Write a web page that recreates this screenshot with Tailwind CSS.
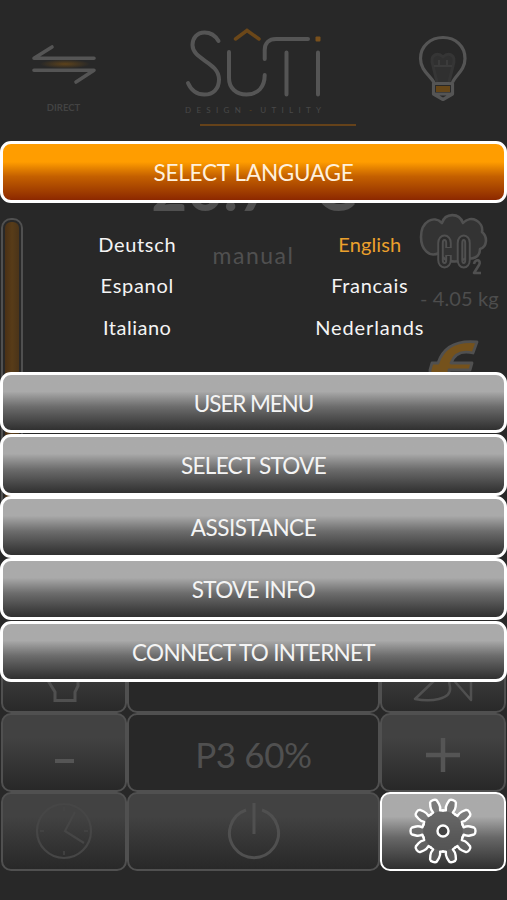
<!DOCTYPE html>
<html lang="en">
<head>
<meta charset="utf-8">
<meta name="viewport" content="width=device-width, initial-scale=1">
<title>Stove remote</title>
<script src="https://cdn.jsdelivr.net/npm/@tailwindcss/browser@4"></script>
</head>
<body class="bg-[#282828] overflow-hidden">
<div class="relative w-[507px] h-[900px] overflow-hidden bg-[#282828] font-['Lato','Open_Sans',sans-serif] text-[#555]">

  <!-- dimmed control panel -->
  <div class="flex flex-col h-full">
    <header class="flex h-[141px] shrink-0">
      <div class="w-[127px] flex flex-col items-center pt-[42px]">
        <svg class="w-[66px] h-[44px]" viewBox="0 0 66 44" fill="none">
          <defs><radialGradient id="glow"><stop offset="0" stop-color="#5e431b"/><stop offset="1" stop-color="#282828"/></radialGradient></defs>
          <ellipse cx="34" cy="22" rx="25" ry="4.500" fill="url(#glow)"/>
          <path d="M63 16.300H3L21 5M3 28.300H63L45 40" stroke="#555" stroke-width="3.600" stroke-linecap="round" stroke-linejoin="round"/>
        </svg>
        <span class="mt-[15px] text-[9.5px] leading-[14px] font-bold text-[#434343]">DIRECT</span>
      </div>
      <div class="w-[253px] flex flex-col pl-[56px] pt-[26px]">
        <svg class="w-[150px] h-[74px]" viewBox="183 26 150 74" fill="none" stroke="#555" stroke-width="4" stroke-linecap="round">
          <path d="M218.500 41C215 35 210 32.500 204.500 32.500C197 32.500 192.500 38 192.500 45C192.500 60 219 62 219 79.500C219 89 213 94.500 204.500 94.500C197 94.500 191 90 188 83"/>
          <path d="M229 52V78C229 88 236 94.500 246.500 94.500C258 94.500 264.700 87 264.700 75M264.700 59V50C264.700 43 269 39 276 39H308M286.500 52.500V94.500M318 52.500V94.500"/>
          <path d="M235.500 39L247 30.500L259 39" stroke="#6b4719" stroke-width="3.500"/>
          <rect x="315.500" y="36.500" width="5" height="5" rx="1" fill="#79501c" stroke="none"/>
        </svg>
        <div class="pl-[2px] text-[8px] leading-[20px] tracking-[5.3px] whitespace-nowrap text-[#484848]">DESIGN<span class="px-[3px] text-[#604518]">-</span>UTILITY</div>
        <div class="ml-[17px] mt-[4px] w-[156px] h-[2px] bg-[#65421a]"></div>
      </div>
      <div class="w-[126px] flex justify-center pt-[34px]">
        <svg class="w-[52px] h-[70px]" viewBox="417 34 52 70" fill="none" stroke="#555" stroke-width="3.200" stroke-linejoin="round">
          <path d="M434 82.500C430 75 420.500 70.500 420.500 58.500C420.500 46 430.500 37.500 443 37.500C455.500 37.500 465 46 465 58.500C465 70.500 455.500 75 452.500 82.500"/>
          <path d="M433.500 83.500H452.500V94L443 99.500L433.500 94ZM434 94H452"/>
          <rect x="436" y="86" width="14" height="6" fill="#674718" stroke="none"/>
          <path d="M437 82L433 66C429 54 438 52 443 57C448 52 457 54 453 66L449 82" stroke="#353535" stroke-width="3" fill="#303030"/>
          <path d="M434 66H452M439 60V66M447 60V66" stroke="#3b3b3b" stroke-width="2"/>
        </svg>
      </div>
    </header>

    <main class="flex h-[493px] shrink-0">
      <div class="w-[127px] pt-[77px] pl-[1px]">
        <div class="w-[22px] h-[330px] border-2 border-[#505050] rounded-[10px] p-[2px]"><div class="h-full rounded-[6px] bg-linear-to-r from-[#4a3015] via-[#583c18] to-[#4a3419]"></div></div>
      </div>
      <div class="w-[253px] flex flex-col items-center">
        <div class="mt-[16px] h-[60px] text-[62px] leading-[60px] font-bold whitespace-nowrap text-[#505050]">20.7 °C</div>
        <div class="mt-[23px] text-[23px] leading-[30px] tracking-[1.5px] text-[#505050]">manual</div>
      </div>
      <div class="w-[127px] flex flex-col pt-[71px]">
        <svg class="ml-[38px] w-[72px] h-[65px]" viewBox="418 212 72 65" fill="#333" stroke="#505050" stroke-width="2.600" stroke-linejoin="round">
          <path d="M439 253C429 258 421 249 421 237C421 221 434 215 442 223C445 213 459 212 463 223C471 214 484 222 482 232C488 237 487 247 480 249C480 258 471 260 468 257C458 264 445 263 439 253Z"/>
          <path d="M448.500 248V243C448.500 236 440.500 236 440.500 243V260C440.500 267 448.500 267 448.500 260V255M460 243C460 236 467.500 236 467.500 243V260C467.500 267 460 267 460 260Z" stroke-width="6.500" fill="none"/>
          <path d="M448.500 247V243C448.500 236 440.500 236 440.500 243V260C440.500 267 448.500 267 448.500 260V256M460 243C460 236 467.500 236 467.500 243V260C467.500 267 460 267 460 260Z" stroke="#2c2c2c" stroke-width="2.600" fill="none"/>
          <path d="M474 264C475 258 482 260 479 265L474 273H481" fill="none"/>
        </svg>
        <div class="ml-[40px] mt-[8px] text-[20px] leading-[26px] tracking-[0.1px] whitespace-nowrap text-[#4d4d4d]">- 4.05 kg</div>
        <svg class="ml-[48px] mt-[26px] w-[58px] h-[60px]" viewBox="428 337 58 60" fill="#75521c" stroke="#505050" stroke-width="2.800" stroke-linejoin="round">
          <path d="M430 370L432 363H438C443 348 456 340 477 342L473 353C460 350 454 355 451 363H472L470 370H449V380H430Z"/>
        </svg>
      </div>
    </main>

    <footer class="mx-[1px] grid grid-cols-[126px_253px_126px] auto-rows-[79px]">
      <div class="border-[2.5px] border-[#505050] rounded-[10px] flex items-end justify-center pb-[8px] bg-linear-to-b from-[#454545] from-30% to-[#292929]">
        <svg class="w-[36px] h-[36px]" viewBox="46 667 36 36" fill="none" stroke="#505050" stroke-width="3"><path d="M47 670V679L55 692V700.500H75V692L78 686V670"/></svg>
      </div>
      <div class="border-[2.5px] border-[#505050] rounded-[10px] flex justify-center pt-[21px] text-[25px] leading-[26px] tracking-[1px]">Domina</div>
      <div class="border-[2.5px] border-[#505050] rounded-[10px] flex items-end justify-center pb-[6px] bg-linear-to-b from-[#454545] from-30% to-[#292929]">
        <svg class="w-[62px] h-[38px]" viewBox="412 667 62 38" fill="none" stroke="#505050" stroke-width="2.500" stroke-linejoin="round"><path d="M438 677L415 699C430 702 452 700 450 687L448 676M450 676L471 700V677"/></svg>
      </div>

      <div class="border-[2.5px] border-[#505050] rounded-[10px] flex items-center justify-center bg-linear-to-b from-[#424242] from-30% to-[#282828]"><div class="mt-[17px] h-[4px] w-[19px] bg-[#555]"></div></div>
      <div class="border-[2.5px] border-[#505050] rounded-[10px] flex items-center justify-center pt-[4px] text-[35px] leading-none tracking-[-0.4px] text-[#505050]">P3 60%</div>
      <div class="border-[2.5px] border-[#505050] rounded-[10px] flex items-center justify-center bg-linear-to-b from-[#424242] from-30% to-[#282828]">
        <svg class="mt-[5px] w-[34px] h-[34px]" viewBox="0 0 34 34" fill="none" stroke="#555" stroke-width="4.500"><path d="M0 17H34M17 0V34"/></svg>
      </div>

      <div class="border-[2.5px] border-[#505050] rounded-[10px] flex items-center justify-center bg-linear-to-b from-[#424242] from-30% to-[#282828]">
        <svg class="w-[60px] h-[60px] mb-[2px]" viewBox="0 0 60 60" fill="none" stroke="#464646" stroke-width="2.200"><circle cx="30" cy="30" r="27"/><path d="M41 11L31 30L50 42"/><path d="M30 6V10M30 50V54M6 30H10M50 30H54" stroke-width="1.500"/></svg>
      </div>
      <div class="border-[2.5px] border-[#505050] rounded-[10px] flex items-center justify-center bg-linear-to-b from-[#424242] from-30% to-[#282828]">
        <svg class="w-[56px] h-[58px] mb-[2px]" viewBox="0 0 56 58" fill="none" stroke="#505050" stroke-width="3"><path d="M20 8A24.500 24.500 0 1 0 36 8M28 1V32"/></svg>
      </div>
      <div class="border-[2.5px] border-white rounded-[10px] flex items-center justify-center bg-linear-to-b from-[#aaa] from-30% via-[#686868] via-58% to-[#303030]">
        <svg class="w-[70px] h-[70px] mb-[2px]" viewBox="-35 -35 70 70" fill="none" stroke="#fff" stroke-width="2.400" stroke-linejoin="round" stroke-linecap="round">
          <defs><path id="tooth" d="M19.500 -6.340L20.600 -3.700Q24 -5.200 27 -4.500L31 -3.500Q32.500 -2.800 32.500 0Q32.500 2.800 31 3.500L27 4.500Q24 5.200 20.600 3.700L19.500 6.340"/></defs>
          <circle r="20" fill="#555" fill-opacity=".8" stroke="none"/>
          <g fill="#666" fill-opacity=".7">
            <use href="#tooth"/><use href="#tooth" transform="rotate(36)"/><use href="#tooth" transform="rotate(72)"/><use href="#tooth" transform="rotate(108)"/><use href="#tooth" transform="rotate(144)"/><use href="#tooth" transform="rotate(180)"/><use href="#tooth" transform="rotate(216)"/><use href="#tooth" transform="rotate(252)"/><use href="#tooth" transform="rotate(288)"/><use href="#tooth" transform="rotate(324)"/>
          </g>
          <circle r="5.500" fill="#444"/>
        </svg>
      </div>
    </footer>
  </div>

  <!-- settings menu -->
  <nav class="absolute inset-x-0 top-[140.5px] flex flex-col text-[#f4f4f4] text-[22.5px] text-center">
    <div class="h-[62px] border-[3px] border-white rounded-[11px] flex items-center justify-center pt-[2px] bg-linear-to-b from-[#ff9d00] from-32% via-[#c46000] via-58% to-[#8c2800] tracking-[-0.25px] text-[#fff0dc]">SELECT LANGUAGE</div>
    <div class="h-[169px] pt-[21px] px-[21px] grid grid-cols-2 auto-rows-[41.5px] text-[20px] leading-[41.5px] tracking-[0.7px]">
      <span>Deutsch</span><span class="tracking-[0.1px] text-[#eba02c]">English</span>
      <span>Espanol</span><span>Francais</span>
      <span class="tracking-[0.5px]">Italiano</span><span class="tracking-[0.9px]">Nederlands</span>
    </div>
    <div class="flex flex-col gap-[0.5px]">
      <div class="h-[61.8px] border-[3px] border-white rounded-[11px] flex items-center justify-center pt-[2px] bg-linear-to-b from-[#aaa] from-30% via-[#6c6c6c] via-58% to-[#303030] tracking-[-1.1px]">USER MENU</div>
      <div class="h-[61.8px] border-[3px] border-white rounded-[11px] flex items-center justify-center pt-[2px] bg-linear-to-b from-[#aaa] from-30% via-[#6c6c6c] via-58% to-[#303030] tracking-[-0.7px]">SELECT STOVE</div>
      <div class="h-[61.8px] border-[3px] border-white rounded-[11px] flex items-center justify-center pt-[2px] bg-linear-to-b from-[#aaa] from-30% via-[#6c6c6c] via-58% to-[#303030] tracking-[-0.5px]">ASSISTANCE</div>
      <div class="h-[61.8px] border-[3px] border-white rounded-[11px] flex items-center justify-center pt-[2px] bg-linear-to-b from-[#aaa] from-30% via-[#6c6c6c] via-58% to-[#303030] tracking-[-0.7px]">STOVE INFO</div>
      <div class="h-[61.8px] border-[3px] border-white rounded-[11px] flex items-center justify-center pt-[2px] bg-linear-to-b from-[#aaa] from-30% via-[#6c6c6c] via-58% to-[#303030] tracking-[-0.7px]">CONNECT TO INTERNET</div>
    </div>
  </nav>
</div>
</body>
</html>
